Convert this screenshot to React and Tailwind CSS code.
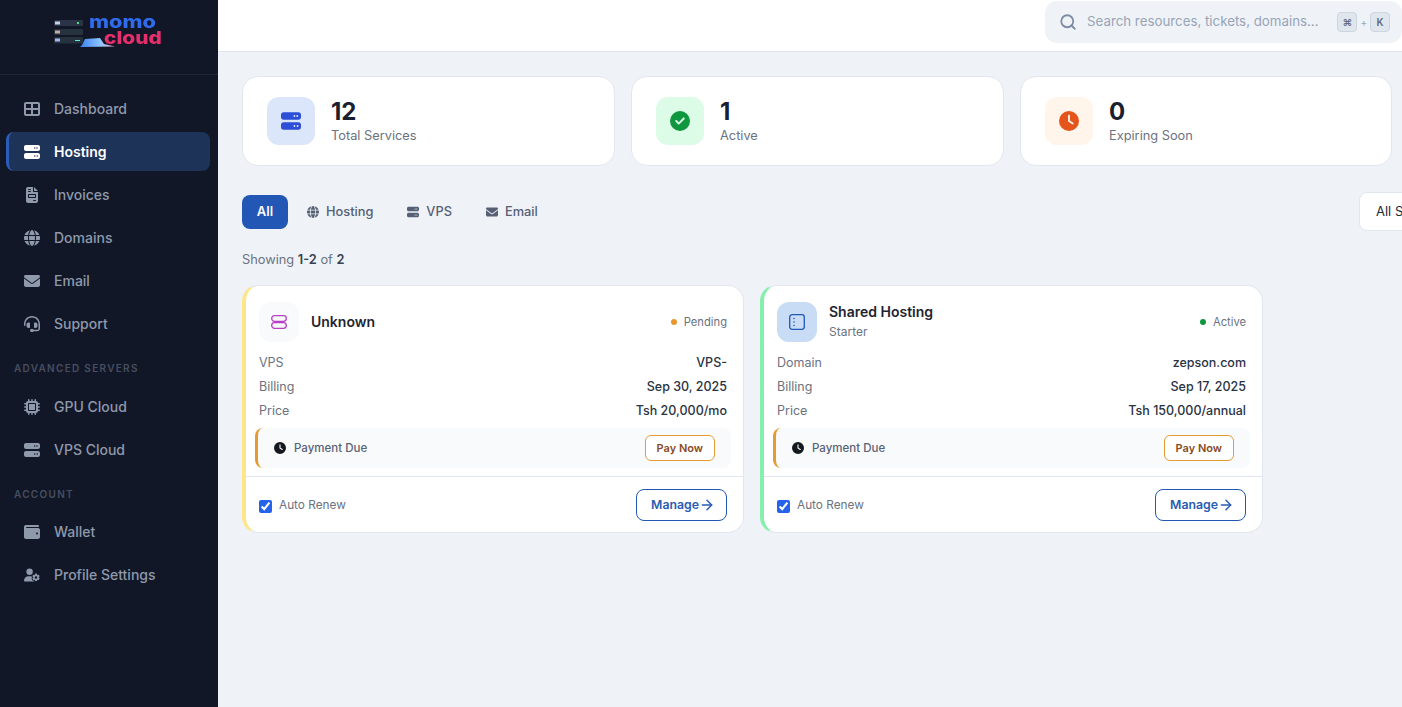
import { ArrowRight, Search } from "lucide-react";
import {
  FaTableCellsLarge,
  FaServer,
  FaFileInvoice,
  FaGlobe,
  FaEnvelope,
  FaHeadset,
  FaMicrochip,
  FaWallet,
  FaUserGear,
  FaCircleCheck,
  FaClock,
} from "react-icons/fa6";

const NavItem = ({ icon: Icon, label, active }) => (
  <div
    className={
      active
        ? "ml-[6px] mr-2 flex h-[39px] items-center gap-[14px] rounded-lg border-l-[3px] border-[#2b5cb8] bg-[#1e3358] pl-[15px] text-sm font-semibold text-white"
        : "ml-[6px] mr-2 flex h-[39px] items-center gap-[14px] rounded-lg pl-[18px] text-sm font-medium text-[#8f99ac]"
    }
  >
    <span className="flex w-4 justify-center text-base">
      <Icon />
    </span>
    {label}
  </div>
);

const NavLabel = ({ children, className }) => (
  <div className={`pl-[14px] pt-4 text-[10px] font-semibold uppercase leading-[11px] tracking-[0.13em] text-[#474e60] ${className}`}>
    {children}
  </div>
);

const Logo = () => (
  <div className="flex h-[75px] items-start border-b border-[#1e2537] pl-[54px] pt-[14px]">
    <svg width="62" height="30" viewBox="0 0 62 30" className="mt-[5px] shrink-0 blur-[0.4px]">
      <defs>
        <linearGradient id="wing" x1="0" x2="1">
          <stop offset="0" stopColor="#3b82f6" />
          <stop offset="0.6" stopColor="#93c5fd" />
          <stop offset="1" stopColor="#f0a6d0" />
        </linearGradient>
      </defs>
      <rect x="0" y="1" width="29" height="6" rx="1" fill="#2a3446" />
      <rect x="0" y="10" width="29" height="6" rx="1" fill="#27323f" />
      <rect x="0" y="18" width="29" height="6.5" rx="1" fill="#27323f" />
      <rect x="1" y="2.5" width="5" height="3" fill="#c7d2e8" />
      <rect x="1" y="11.5" width="5" height="3" fill="#c9a8a8" />
      <rect x="1" y="19.5" width="5" height="3" fill="#a8b4f0" />
      <rect x="23" y="3" width="2" height="2" fill="#4ade80" />
      <rect x="21" y="21" width="5" height="1" fill="#5eead4" />
      <path d="M28 26 L31 20 L46 19 L50 25 L61 27.5 L26 28 Z" fill="url(#wing)" />
    </svg>
    <div className="-ml-[27px] flex w-[73px] flex-col text-[18px] font-extrabold leading-[16px]">
      <span className="origin-left scale-x-[1.2] text-[#2f6bed]">momo</span>
      <span className="origin-right scale-x-[1.16] self-end text-[#e62e6b]">cloud</span>
    </div>
  </div>
);

const Sidebar = () => (
  <aside className="w-[218px] shrink-0 bg-[#111727]">
    <Logo />
    <nav className="flex flex-col gap-1 pt-[14px]">
      <NavItem icon={FaTableCellsLarge} label="Dashboard" />
      <NavItem icon={FaServer} label="Hosting" active />
      <NavItem icon={FaFileInvoice} label="Invoices" />
      <NavItem icon={FaGlobe} label="Domains" />
      <NavItem icon={FaEnvelope} label="Email" />
      <NavItem icon={FaHeadset} label="Support" />
      <NavLabel className="pb-[9px]">Advanced Servers</NavLabel>
      <NavItem icon={FaMicrochip} label="GPU Cloud" />
      <NavItem icon={FaServer} label="VPS Cloud" />
      <NavLabel className="pb-2">Account</NavLabel>
      <NavItem icon={FaWallet} label="Wallet" />
      <NavItem icon={FaUserGear} label="Profile Settings" />
    </nav>
  </aside>
);

const Header = () => (
  <header className="flex h-[52px] shrink-0 justify-end border-b border-[#e0e5ec] bg-white">
    <div className="mt-px flex h-[42px] w-[357px] items-center rounded-xl bg-[#eff3f8] pl-[14px] pr-3">
      <Search size={18} strokeWidth={2.4} className="text-[#7d8ba3]" />
      <span className="ml-[10px] flex-1 text-[13.3px] text-[#98a4b6]">Search resources, tickets, domains...</span>
      <span className="flex h-[20px] w-[20px] items-center justify-center rounded border border-[#cdd5e0] bg-[#e0e6ee] text-[10px] font-semibold text-[#5f6b7e]">
        ⌘
      </span>
      <span className="mx-[3px] text-[10px] text-[#98a4b6]">+</span>
      <span className="flex h-[20px] w-[20px] items-center justify-center rounded border border-[#cdd5e0] bg-[#e0e6ee] text-[10px] font-semibold text-[#5f6b7e]">
        K
      </span>
    </div>
  </header>
);

const Stat = ({ iconBg, iconColor, icon: Icon, value, label }) => (
  <div className="flex h-[90px] items-center gap-4 rounded-2xl border border-[#e2e7ef] bg-white pl-6">
    <div className={`flex h-12 w-12 items-center justify-center rounded-xl text-xl ${iconBg} ${iconColor}`}>
      <Icon />
    </div>
    <div className="mb-[2px]">
      <div className="text-2xl font-bold leading-[30px] text-[#1a2030]">{value}</div>
      <div className="text-[12.8px] leading-[17px] text-[#6b7280]">{label}</div>
    </div>
  </div>
);

const Tab = ({ icon: Icon, label }) => (
  <div className="flex h-[34px] items-center gap-[7px] px-4 text-[12.8px] font-medium text-[#556074]">
    <span className="text-[12px]">
      <Icon />
    </span>
    {label}
  </div>
);

const Row = ({ label, value }) => (
  <div className="flex h-6 items-center justify-between text-[12.5px]">
    <span className="text-[#6b7280]">{label}</span>
    <span className="font-medium text-[#2a3342]">{value}</span>
  </div>
);

const StackIcon = () => (
  <svg width="16" height="14" viewBox="0 0 16 14" fill="none" stroke="#b83fc4" strokeWidth="1.3">
    <rect x="0.7" y="0.7" width="14.6" height="5.6" rx="2.8" />
    <rect x="0.7" y="7.7" width="14.6" height="5.6" rx="2.8" />
  </svg>
);

const PanelIcon = () => (
  <svg width="16" height="16" viewBox="0 0 16 16" fill="none">
    <rect x="0.7" y="0.7" width="14.6" height="14.6" rx="2.5" stroke="#2257b5" strokeWidth="1.3" />
    <circle cx="5" cy="4.5" r="0.8" fill="#2257b5" />
    <circle cx="5" cy="8" r="0.8" fill="#2257b5" />
    <circle cx="5" cy="11.5" r="0.8" fill="#2257b5" />
  </svg>
);

const ServiceCard = ({ accent, iconBg, icon, title, sub, dot, status, rows }) => (
  <div className={`h-[248px] rounded-2xl border border-l-4 border-[#e2e7ef] bg-white ${accent}`}>
    <div className="flex h-[56px] items-start justify-between pl-[13px] pr-4 pt-4">
      <div className="flex items-center gap-3">
        <div className={`flex h-10 w-10 items-center justify-center rounded-xl ${iconBg}`}>{icon}</div>
        <div>
          <div className="text-sm font-semibold leading-[20px] text-[#1f2430]">{title}</div>
          {sub && <div className="text-xs leading-[20px] text-[#6b7280]">{sub}</div>}
        </div>
      </div>
      <div className="flex h-10 items-center gap-[7px] text-[11.2px] text-[#6b7280]">
        <span className={`h-[6px] w-[6px] rounded-full ${dot}`} />
        {status}
      </div>
    </div>
    <div className="pl-[13px] pr-4 pt-[9px]">
      {rows.map((r) => (
        <Row key={r[0]} label={r[0]} value={r[1]} />
      ))}
    </div>
    <div className="ml-[9px] mr-3 mt-[5px] flex h-10 items-center justify-between rounded-lg border-l-[3px] border-[#e49b34] bg-[#f8fafc] pl-4 pr-4">
      <div className="flex items-center gap-2 text-[11.5px] font-medium text-[#596274]">
        <FaClock className="text-[12px] text-[#14181f]" />
        <span className="mt-[2px]">Payment Due</span>
      </div>
      <button className="h-[26px] rounded-md border border-[#e49b34] bg-white px-[11px] text-[11px] font-semibold text-[#8a4b1f]">
        Pay Now
      </button>
    </div>
    <div className="mt-2 flex h-[57px] items-center justify-between border-t border-[#e2e7ef] pl-[13px] pr-4">
      <label className="mt-[2px] flex items-center gap-[7px] text-[11.8px] text-[#6b7280]">
        <input type="checkbox" defaultChecked className="h-[13px] w-[13px] accent-[#2563eb]" />
        Auto Renew
      </label>
      <button className="flex h-8 items-center rounded-lg border border-[#2257b5] bg-white pl-[14px] pr-[11px] text-[12.3px] font-semibold text-[#2a5cb0]">
        Manage
        <ArrowRight size={16} strokeWidth={2.2} />
      </button>
    </div>
  </div>
);

export default function App() {
  return (
    <div className="flex h-screen overflow-hidden bg-[#eff3f8] font-['Inter',sans-serif]">
      <Sidebar />
      <div className="flex min-w-0 flex-1 flex-col">
        <Header />
        <main className="overflow-hidden pl-6 pt-6">
          <div className="grid w-[1150px] grid-cols-[373px_373px_372px] gap-4">
            <Stat iconBg="bg-[#dbe6fb]" iconColor="text-[#2d4fd8]" icon={FaServer} value="12" label="Total Services" />
            <Stat iconBg="bg-[#dcfce7]" iconColor="text-[#0f973f]" icon={FaCircleCheck} value="1" label="Active" />
            <Stat iconBg="bg-[#fff5eb]" iconColor="text-[#e4551c]" icon={FaClock} value="0" label="Expiring Soon" />
          </div>

          <div className="mt-[26px] flex w-[1237px] items-start justify-between">
            <div className="mt-[3px] flex items-center gap-[2px]">
              <div className="mr-px flex h-[34px] w-[46px] items-center justify-center rounded-lg bg-[#2257b5] text-[13px] font-semibold text-white">
                All
              </div>
              <Tab icon={FaGlobe} label="Hosting" />
              <Tab icon={FaServer} label="VPS" />
              <Tab icon={FaEnvelope} label="Email" />
            </div>
            <div className="flex h-[39px] w-[120px] items-center rounded-lg border border-[#e2e7ef] bg-white pl-4 text-[13px] text-[#1f2937]">
              All Status
            </div>
          </div>

          <div className="mt-[19px] h-[20px] text-[12.8px] leading-[20px] text-[#6b7280]">
            Showing <b className="font-semibold text-[#374151]">1-2</b> of <b className="font-semibold text-[#374151]">2</b>
          </div>

          <div className="mt-[15px] grid w-[1021px] grid-cols-[502px_503px] gap-4">
            <ServiceCard
              accent="border-l-[#fde68a]"
              iconBg="bg-[#f8fafc]"
              icon={<StackIcon />}
              title="Unknown"
              dot="bg-[#e8972e]"
              status="Pending"
              rows={[
                ["VPS", "VPS-"],
                ["Billing", "Sep 30, 2025"],
                ["Price", "Tsh 20,000/mo"],
              ]}
            />
            <ServiceCard
              accent="border-l-[#86efac]"
              iconBg="bg-[#c8dcf5]"
              icon={<PanelIcon />}
              title="Shared Hosting"
              sub="Starter"
              dot="bg-[#0f973f]"
              status="Active"
              rows={[
                ["Domain", "zepson.com"],
                ["Billing", "Sep 17, 2025"],
                ["Price", "Tsh 150,000/annual"],
              ]}
            />
          </div>
        </main>
      </div>
    </div>
  );
}
